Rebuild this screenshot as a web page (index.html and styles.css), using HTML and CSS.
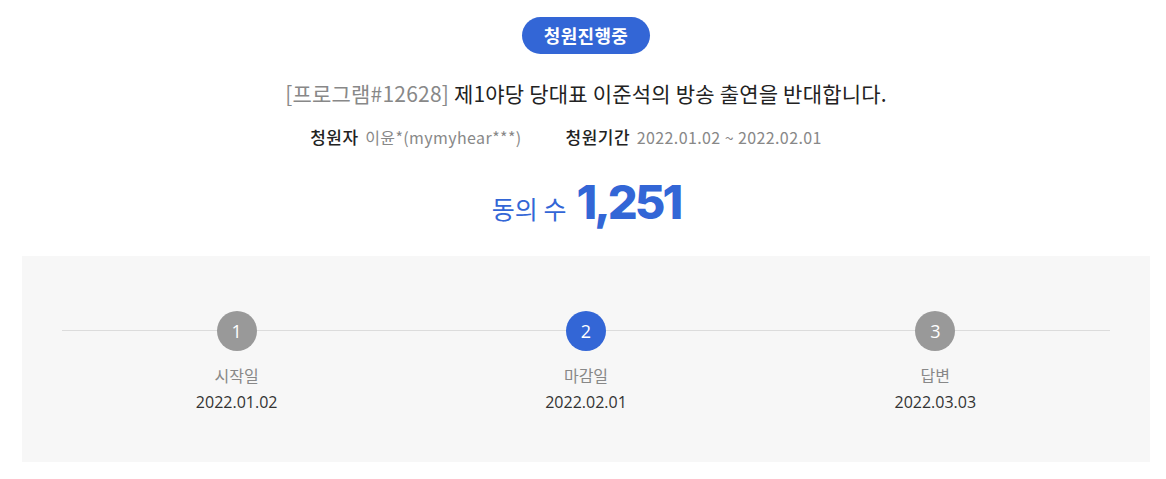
FILE: index.html
```html
<!DOCTYPE html>
<html>
<head>
    <meta charset="utf-8">
    <title>청원 상세</title>
    <link rel="stylesheet" href="styles.css">
</head>
<body>
    <div class="petition">
        <div class="head">
            <span class="status">청원진행중</span>
            <h1 class="title"><span class="category">[프로그램#12628]</span> 제1야당 당대표 이준석의 방송 출연을 반대합니다.</h1>
            <div class="meta">
                <span class="meta-item"><strong>청원자</strong> <span class="val">이윤*(mymyhear***)</span></span>
                <span class="meta-item"><strong>청원기간</strong> <span class="val">2022.01.02 ~ 2022.02.01</span></span>
            </div>
            <div class="count">
                <span class="count-label">동의 수</span>
                <span class="count-num">1,251</span>
            </div>
        </div>

        <div class="progress">
            <ol class="steps">
                <li class="step">
                    <span class="dot">1</span>
                    <span class="step-name">시작일</span>
                    <span class="step-date">2022.01.02</span>
                </li>
                <li class="step on">
                    <span class="dot">2</span>
                    <span class="step-name">마감일</span>
                    <span class="step-date">2022.02.01</span>
                </li>
                <li class="step">
                    <span class="dot">3</span>
                    <span class="step-name">답변</span>
                    <span class="step-date">2022.03.03</span>
                </li>
            </ol>
        </div>
    </div>
</body>
</html>
```

FILE: styles.css
```css
body {
    margin: 0;
    padding: 0;
    background: #fff;
    font-family: "Noto Sans CJK KR", "Noto Sans", sans-serif;
    color: #222;
}
.petition {
    width: 1128px;
    margin: 0 0 0 22px;
    padding-top: 17px;
}
.head {
    display: flex;
    flex-direction: column;
    align-items: center;
}
.status {
    display: inline-block;
    width: 128px;
    height: 37px;
    line-height: 36px;
    text-align: center;
    border-radius: 19px;
    background: #3366d6;
    color: #fff;
    font-size: 18px;
    font-weight: 700;
    letter-spacing: 0.3px;
}
.title {
    margin: 24px 0 0;
    font-size: 21px;
    font-weight: 400;
    line-height: 30px;
    color: #222;
    letter-spacing: 0.2px;
}
.category {
    color: #888;
}
.meta {
    display: flex;
    gap: 44px;
    margin-top: 18px;
    padding-right: 40px;
    font-size: 16px;
    line-height: 22px;
}
.meta strong {
    font-size: 17px;
    font-weight: 500;
    color: #222;
    margin-right: 3px;
    letter-spacing: 0.5px;
}
.meta .val {
    color: #888;
    letter-spacing: 0.4px;
}
.count {
    display: flex;
    align-items: baseline;
    gap: 10px;
    margin-top: 25px;
    height: 60px;
}
.count-label {
    font-size: 25px;
    color: #3366d6;
}
.count-num {
    font-family: Inter, Roboto, sans-serif;
    font-size: 47px;
    font-weight: 800;
    color: #3366d6;
    letter-spacing: -3px;
}
.progress {
    margin-top: 23px;
    background: #f7f7f7;
    height: 206px;
    padding: 55px 40px 0;
    box-sizing: border-box;
}
.steps {
    list-style: none;
    margin: 0;
    padding: 0;
    display: flex;
    position: relative;
}
.steps::before {
    content: "";
    position: absolute;
    left: 0;
    right: 0;
    top: 19px;
    height: 1px;
    background: #dcdcdc;
}
.step {
    flex: 1;
    display: flex;
    flex-direction: column;
    align-items: center;
    position: relative;
}
.dot {
    width: 40px;
    height: 40px;
    border-radius: 50%;
    background: #999;
    color: #fff;
    font-family: "Open Sans", sans-serif;
    font-size: 18px;
    line-height: 40px;
    text-align: center;
}
.step.on .dot {
    background: #3366d6;
}
.step-name {
    margin-top: 12px;
    font-size: 16px;
    line-height: 24px;
    color: #888;
}
.step-date {
    margin-top: 4px;
    font-family: "Open Sans", sans-serif;
    font-size: 16px;
    line-height: 22px;
    color: #333;
}
```
